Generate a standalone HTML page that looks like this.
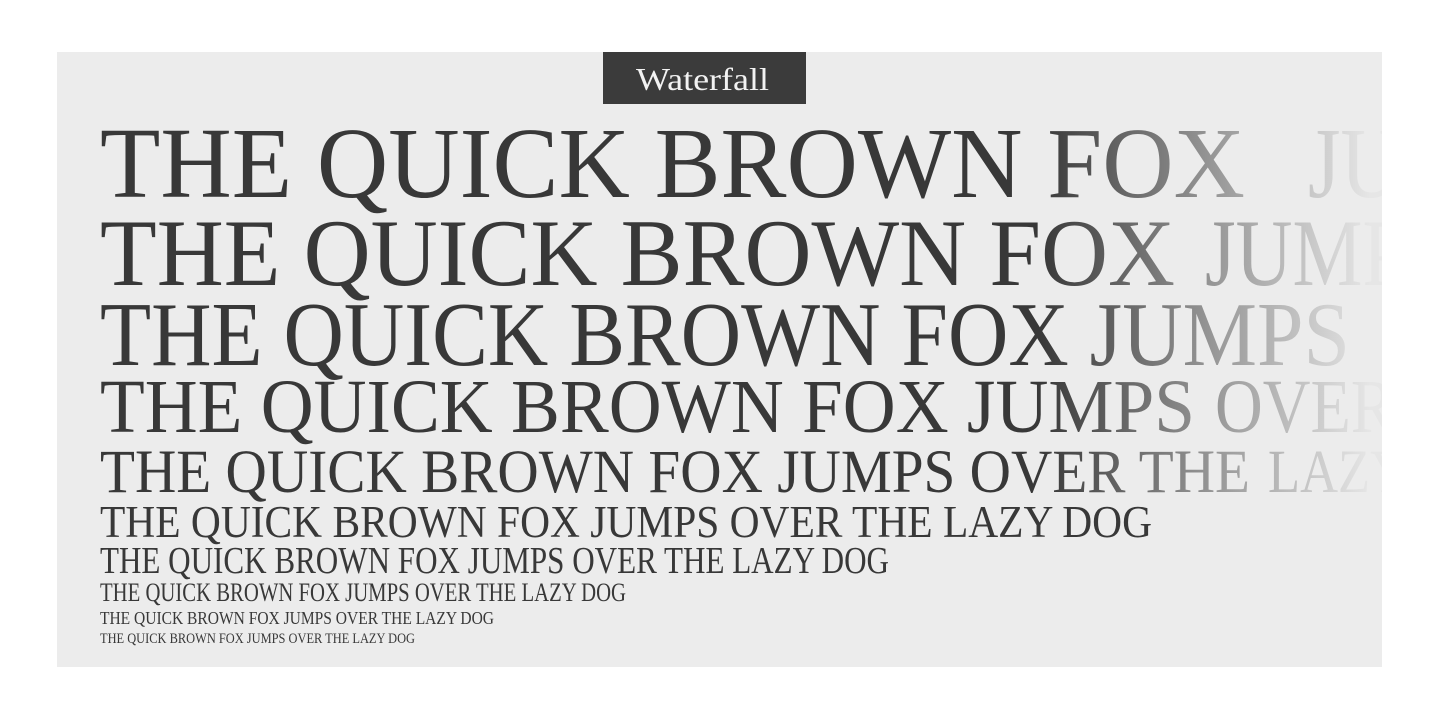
<!DOCTYPE html>
<html><head><meta charset="utf-8">
<style>
html,body{margin:0;padding:0;background:#fff;width:1440px;height:720px;overflow:hidden}
svg{display:block}
</style></head>
<body>
<svg width="1440" height="720" viewBox="0 0 1440 720" xmlns="http://www.w3.org/2000/svg" font-family="'Liberation Serif', serif">
<defs>
<linearGradient id="fade" gradientUnits="userSpaceOnUse" x1="1040" y1="0" x2="1370" y2="0">
<stop offset="0" stop-color="#383838"/>
<stop offset="0.45" stop-color="#8a8a8a"/>
<stop offset="1" stop-color="#e6e6e6"/>
</linearGradient>
<clipPath id="cp"><rect x="57" y="52" width="1325" height="615"/></clipPath>
</defs>
<rect x="57" y="52" width="1325" height="615" fill="#ececec"/>
<rect x="603" y="52" width="203" height="52" fill="#3b3b3b"/>
<text x="636" y="90" font-size="32" fill="#f2f2f2" textLength="133" lengthAdjust="spacingAndGlyphs">Waterfall</text>
<g clip-path="url(#cp)" fill="url(#fade)">
<text x="100" y="197" font-size="101" textLength="1145" lengthAdjust="spacingAndGlyphs">THE QUICK BROWN FOX</text>
<text x="1308" y="197" font-size="101" textLength="260" lengthAdjust="spacingAndGlyphs">JUMPS</text>
<text x="100" y="285" font-size="95" textLength="1075" lengthAdjust="spacingAndGlyphs">THE QUICK BROWN FOX</text>
<text x="1205" y="285" font-size="95" textLength="245" lengthAdjust="spacingAndGlyphs">JUMPS</text>
<text x="100" y="365" font-size="91" textLength="1250" lengthAdjust="spacingAndGlyphs">THE QUICK BROWN FOX JUMPS</text>
<text x="100" y="432" font-size="76" textLength="1095" lengthAdjust="spacingAndGlyphs">THE QUICK BROWN FOX JUMPS</text>
<text x="1215" y="432" font-size="76" textLength="180" lengthAdjust="spacingAndGlyphs">OVER</text>
<text x="100" y="492" font-size="61" textLength="1150" lengthAdjust="spacingAndGlyphs">THE QUICK BROWN FOX JUMPS OVER THE</text>
<text x="1268" y="492" font-size="61" textLength="140" lengthAdjust="spacingAndGlyphs">LAZY</text>
</g>
<g fill="#383838">
<text x="100" y="537" font-size="45" textLength="1052" lengthAdjust="spacingAndGlyphs">THE QUICK BROWN FOX JUMPS OVER THE LAZY DOG</text>
<text x="100" y="573" font-size="38" textLength="789" lengthAdjust="spacingAndGlyphs">THE QUICK BROWN FOX JUMPS OVER THE LAZY DOG</text>
<text x="100" y="601" font-size="26" textLength="526" lengthAdjust="spacingAndGlyphs">THE QUICK BROWN FOX JUMPS OVER THE LAZY DOG</text>
<text x="100" y="624" font-size="18" textLength="394" lengthAdjust="spacingAndGlyphs">THE QUICK BROWN FOX JUMPS OVER THE LAZY DOG</text>
<text x="100" y="643" font-size="15" textLength="315" lengthAdjust="spacingAndGlyphs">THE QUICK BROWN FOX JUMPS OVER THE LAZY DOG</text>
</g>
</svg>
</body></html>
